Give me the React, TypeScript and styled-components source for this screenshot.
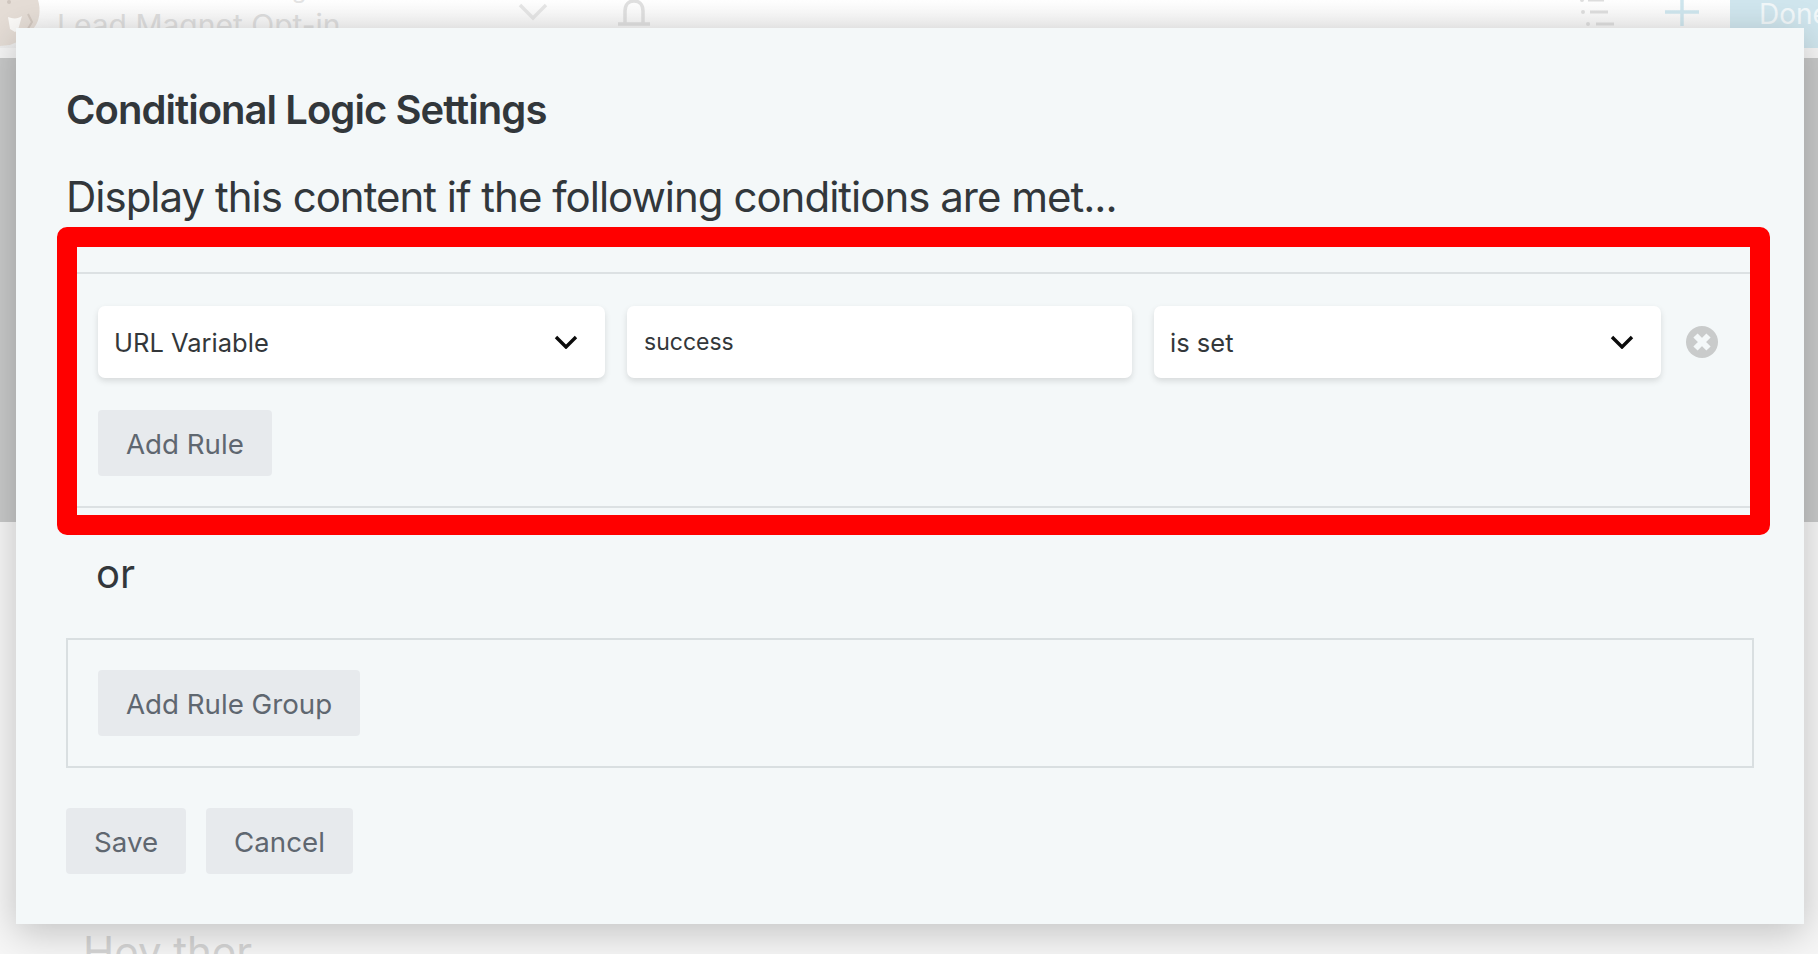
import React from 'react';
import styled, { createGlobalStyle } from 'styled-components';

const GlobalStyle = createGlobalStyle`
  html, body {
    margin: 0;
    padding: 0;
    height: 100%;
    overflow: hidden;
    background: #f3f3f3;
  }
  * {
    box-sizing: border-box;
  }
`;

function Chevron() {
  return (
    <ChevronIcon viewBox='0 0 24 14' fill='none'>
      <path d='M2 2l10 10L22 2' stroke='#0b0b0b' strokeWidth='3.4' />
    </ChevronIcon>
  );
}

function RemoveIcon() {
  return (
    <RemoveSvg viewBox='0 0 32 32'>
      <circle cx='16' cy='16' r='16' fill='#c9cbcb' />
      <path d='M9.5 9.5l13 13M22.5 9.5l-13 13' stroke='#f4f8f9' strokeWidth='6' />
    </RemoveSvg>
  );
}

function App() {
  return (
    <>
      <GlobalStyle />
      <Page>
        <TopBar>
          <Avatar viewBox='0 0 40 48'>
            <path d='M0 0h38c3 10 2 22-6 30-6 7-14 12-22 15l-10 1z' fill='#e5ddd6' />
            <path d='M8 17c5 2 10 2 14-1l-4 14-3 2-5-3z' fill='#fbfaf8' />
            <path d='M28 14l4 8-6 10' fill='none' stroke='#d2c8c0' strokeWidth='2' />
            <circle cx='9' cy='2' r='2' fill='#cfc6be' />
          </Avatar>
          <TitleBlock>
            <Crumb>Conversion Marketing</Crumb>
            <FormName>Lead Magnet Opt-in</FormName>
          </TitleBlock>
          <BarIcon viewBox='0 0 32 26' $width={32} $after={69}>
            <path d='M3 5l13 13L29 5' fill='none' stroke='#e6e6e6' strokeWidth='3.5' />
          </BarIcon>
          <BarIcon viewBox='0 0 32 26' $width={32}>
            <path d='M7 24V11C7 4 11 1 16 1s9 3 9 10v13M0 24h32' fill='none' stroke='#e0e0e0' strokeWidth='3.5' />
          </BarIcon>
          <BarRight>
            <BarIcon viewBox='0 0 36 26' $width={36} $after={50}>
              <path d='M9 0h16M11 12h18M17 24h18' stroke='#dedede' strokeWidth='3' />
              <circle cx='3' cy='0' r='2' fill='#dedede' />
              <circle cx='4' cy='12' r='2' fill='#dedede' />
              <circle cx='9' cy='24' r='2' fill='#dedede' />
            </BarIcon>
            <BarIcon viewBox='0 0 34 26' $width={34} $after={31}>
              <path d='M17 0v26M0 12h34' stroke='#cfe6ee' strokeWidth='3.5' />
            </BarIcon>
            <DoneButton>Done</DoneButton>
          </BarRight>
        </TopBar>
        <GrayBand />
        <Greeting>Hey ther</Greeting>

        <Dialog>
          <DialogTitle>Conditional Logic Settings</DialogTitle>
          <Lead>Display this content if the following conditions are met...</Lead>
          <Highlight>
            <RuleGroup>
              <RuleRow>
                <Field $width={507}>
                  URL Variable
                  <Chevron />
                </Field>
                <Field $width={505} $small>
                  success
                </Field>
                <Field $width={507}>
                  is set
                  <Chevron />
                </Field>
                <RemoveIcon />
              </RuleRow>
              <GrayButton>Add Rule</GrayButton>
            </RuleGroup>
          </Highlight>
          <OrLabel>or</OrLabel>
          <GroupBox>
            <GrayButton>Add Rule Group</GrayButton>
          </GroupBox>
          <Actions>
            <GrayButton>Save</GrayButton>
            <GrayButton>Cancel</GrayButton>
          </Actions>
        </Dialog>
      </Page>
    </>
  );
}

const Page = styled.div`
  position: relative;
  width: 1818px;
  height: 954px;
  overflow: hidden;
  font-family: Inter, 'Liberation Sans', sans-serif;
  background: #f6f6f6;
`;

const TopBar = styled.div`
  display: flex;
  height: 48px;
  overflow: hidden;
  background: linear-gradient(#ffffff, #eeeeee);
`;

const Avatar = styled.svg`
  width: 40px;
  height: 48px;
  flex: none;
`;

const TitleBlock = styled.div`
  flex: none;
  width: 460px;
  margin-left: 17px;
  margin-top: -24px;
  color: #dedede;
  font-size: 30px;
  line-height: 36px;
  white-space: nowrap;
`;

const Crumb = styled.div`
  font-size: 24px;
  line-height: 28px;
  color: #e4e4e4;
`;

const FormName = styled.div`
  margin-top: 3px;
`;

const BarIcon = styled.svg<{ $after?: number; $width: number }>`
  flex: none;
  width: ${(props) => props.$width}px;
  height: 26px;
  margin-right: ${(props) => props.$after || 0}px;
`;

const BarRight = styled.div`
  margin-left: auto;
  display: flex;
  align-items: flex-start;
`;

const DoneButton = styled.div`
  width: 88px;
  height: 48px;
  padding-left: 29px;
  background: #d0e6ee;
  color: #f2f8fa;
  font-size: 28px;
  line-height: 28px;
`;

const GrayBand = styled.div`
  height: 464px;
  margin-top: 10px;
  background: #c8c9c9;
`;

const Greeting = styled.div`
  position: absolute;
  left: 83px;
  top: 929px;
  color: #d4d4d4;
  font-size: 42px;
  line-height: 46px;
`;

const Dialog = styled.div`
  position: absolute;
  top: 28px;
  left: 16px;
  width: 1788px;
  height: 896px;
  padding: 58px 50px 0;
  background: #f4f8f9;
  box-shadow: 0 8px 36px rgba(0, 0, 0, 0.22);
`;

const DialogTitle = styled.h2`
  margin: 0;
  color: #32373b;
  font-size: 40px;
  font-weight: 560;
  letter-spacing: -0.95px;
  line-height: 48px;
`;

const Lead = styled.p`
  margin: 40px 0 0;
  color: #32373b;
  font-size: 42px;
  font-weight: 400;
  letter-spacing: -1px;
  line-height: 46px;
`;

const Highlight = styled.div`
  margin: 7px 0 0 -9px;
  width: 1713px;
  height: 308px;
  border: 20px solid #ff0000;
  border-radius: 10px;
`;

const RuleGroup = styled.div`
  height: 236px;
  margin-top: 25px;
  padding: 32px 21px 0;
  border-top: 2px solid #dce1e3;
  border-bottom: 2px solid #dce1e3;
`;

const RuleRow = styled.div`
  display: flex;
  align-items: center;
  gap: 22px;
  margin-bottom: 32px;
`;

const Field = styled.div<{ $width: number; $small?: boolean }>`
  display: flex;
  align-items: center;
  justify-content: space-between;
  width: ${(props) => props.$width}px;
  height: 72px;
  padding: 0 27px 0 ${(props) => (props.$small ? 17 : 16)}px;
  background: #ffffff;
  border-radius: 7px;
  box-shadow: 0 3px 6px rgba(0, 0, 0, 0.12);
  color: #33373a;
  font-size: ${(props) => (props.$small ? 23 : 25.5)}px;
`;

const ChevronIcon = styled.svg`
  width: 24px;
  height: 14px;
`;

const RemoveSvg = styled.svg`
  width: 32px;
  height: 32px;
  flex: none;
  margin-left: 3px;
`;

const GrayButton = styled.button`
  display: block;
  height: 66px;
  padding: 2px 28px 0;
  border: 0;
  border-radius: 4px;
  background: #e7eaed;
  color: #5f6770;
  font-family: inherit;
  font-size: 27.7px;
`;

const OrLabel = styled.div`
  margin: 14px 0 0 30px;
  color: #32373b;
  font-size: 40px;
  line-height: 50px;
`;

const GroupBox = styled.div`
  width: 1688px;
  height: 130px;
  margin-top: 39px;
  padding: 30px;
  border: 2px solid #d9dfe1;
`;

const Actions = styled.div`
  display: flex;
  gap: 20px;
  margin-top: 40px;
`;

export default App;
